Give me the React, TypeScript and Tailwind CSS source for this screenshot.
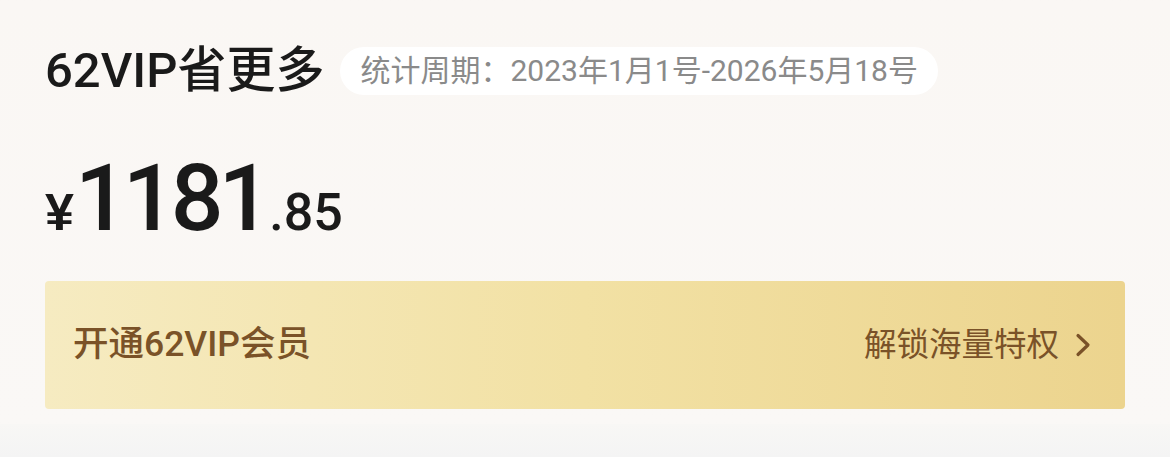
const latin = "font-['Roboto','Noto_Sans_CJK_SC',sans-serif]";

const SavingsCard = () => {
  return (
    <div className="bg-gradient-to-b from-[#faf7f4] to-[#faf8f6] px-[45px] pt-[47px] pb-[15px]">
      <div className="flex items-center">
        <h1
          className={`${latin} text-[49px] leading-[48px] font-medium text-[#1a1a1a]`}
        >
          62VIP省更多
        </h1>
        <div className="ml-[16px] flex h-[48px] items-center rounded-full bg-white px-[20px]">
          <span
            className={`${latin} text-[30px] leading-none whitespace-nowrap text-[#8a8a8a]`}
          >
            统计周期：2023年1月1号-2026年5月18号
          </span>
        </div>
      </div>

      <div className="mt-[57px] flex items-baseline text-[#1a1a1a]">
        <span className="font-['Liberation_Sans',sans-serif] text-[52px] leading-none font-bold">
          ¥
        </span>
        <span
          className={`${latin} ml-[1px] text-[93px] leading-[93px] font-medium tracking-[-5px]`}
        >
          1181
        </span>
        <span
          className={`${latin} ml-[3px] text-[52px] leading-none font-medium`}
        >
          .85
        </span>
      </div>

      <div className="mt-[36px] flex h-[128px] items-center justify-between rounded-[4px] bg-gradient-to-r from-[#f6ebc1] via-[#f2e1a4] to-[#ecd48e] pr-[34px] pl-[28px]">
        <span
          className={`${latin} text-[35.5px] leading-none font-medium text-[#7a5228]`}
        >
          开通62VIP会员
        </span>
        <div className="flex items-center gap-[16px]">
          <span
            className={`${latin} text-[32.5px] leading-none text-[#7a5228]`}
          >
            解锁海量特权
          </span>
          <svg
            width="16"
            height="24"
            viewBox="0 0 16 24"
            fill="none"
            className="text-[#7a5228]"
          >
            <path
              d="M3 2.5 L13 12 L3 21.5"
              stroke="currentColor"
              strokeWidth="3.2"
              strokeLinecap="round"
              strokeLinejoin="round"
            />
          </svg>
        </div>
      </div>
    </div>
  );
};

export default function App() {
  return (
    <div className="h-[469px] w-[1170px] bg-white">
      <SavingsCard />
      <div className="h-[33px] bg-gradient-to-b from-[#f8f7f5] to-[#f4f4f4]" />
    </div>
  );
}
